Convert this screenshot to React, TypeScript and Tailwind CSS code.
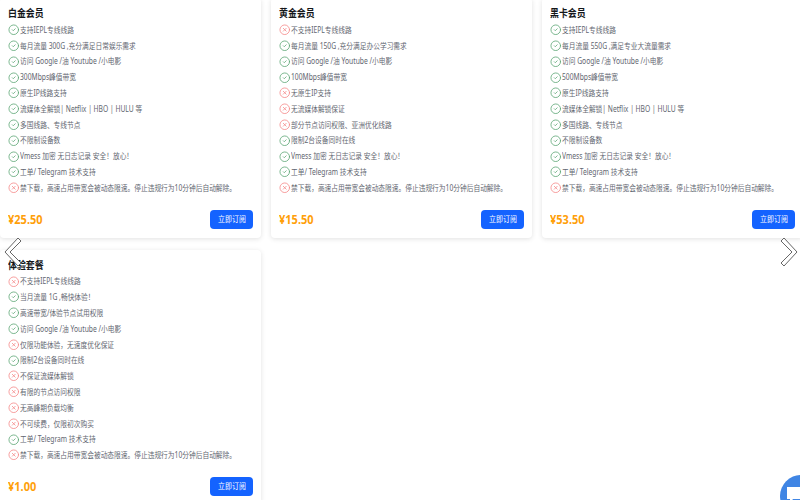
import { FC } from "react";
import { CircleCheck, CircleX } from "lucide-react";

interface IPlan {
  title: string;
  price: string;
  items: [boolean, string][];
}

const LIMIT = "禁下载，高速占用带宽会被动态限速。停止违规行为10分钟后自动解除。";
const TICKET = "工单/ Telegram 技术支持";
const VMESS = "Vmess 加密 无日志记录 安全！放心！";
const ACCESS = "访问 Google /油 Youtube /小电影";

const Plans: IPlan[] = [
  {
    title: "白金会员",
    price: "¥25.50",
    items: [
      [true, "支持IEPL专线线路"],
      [true, "每月流量 300G ,充分满足日常娱乐需求"],
      [true, ACCESS],
      [true, "300Mbps峰值带宽"],
      [true, "原生IP线路支持"],
      [true, "流媒体全解锁| Netflix | HBO | HULU 等"],
      [true, "多国线路、专线节点"],
      [true, "不限制设备数"],
      [true, VMESS],
      [true, TICKET],
      [false, LIMIT],
    ],
  },
  {
    title: "黄金会员",
    price: "¥15.50",
    items: [
      [false, "不支持IEPL专线线路"],
      [true, "每月流量 150G ,充分满足办公学习需求"],
      [true, ACCESS],
      [true, "100Mbps峰值带宽"],
      [false, "无原生IP支持"],
      [false, "无流媒体解锁保证"],
      [false, "部分节点访问权限、亚洲优化线路"],
      [true, "限制2台设备同时在线"],
      [true, VMESS],
      [true, TICKET],
      [false, LIMIT],
    ],
  },
  {
    title: "黑卡会员",
    price: "¥53.50",
    items: [
      [true, "支持IEPL专线线路"],
      [true, "每月流量 550G ,满足专业大流量需求"],
      [true, ACCESS],
      [true, "500Mbps峰值带宽"],
      [true, "原生IP线路支持"],
      [true, "流媒体全解锁| Netflix | HBO | HULU 等"],
      [true, "多国线路、专线节点"],
      [true, "不限制设备数"],
      [true, VMESS],
      [true, TICKET],
      [false, LIMIT],
    ],
  },
  {
    title: "体验套餐",
    price: "¥1.00",
    items: [
      [false, "不支持IEPL专线线路"],
      [true, "当月流量 1G ,畅快体验！"],
      [true, "高速带宽/体验节点试用权限"],
      [true, ACCESS],
      [false, "仅限功能体验，无速度优化保证"],
      [true, "限制2台设备同时在线"],
      [false, "不保证流媒体解锁"],
      [false, "有限的节点访问权限"],
      [false, "无高峰期负载均衡"],
      [false, "不可续费，仅限初次购买"],
      [true, TICKET],
      [false, LIMIT],
    ],
  },
];

const PlanCard: FC<{ plan: IPlan }> = ({ plan }) => {
  return (
    <div className="flex w-[261px] flex-col rounded-[4px] bg-white px-2 pt-2 pb-2 shadow-[0_1px_5px_rgba(0,0,0,0.12)]">
      <h3 className="h-[14px] origin-left scale-x-[0.85] text-[10.5px] leading-[14px] font-bold text-[#14171a]">
        {plan.title}
      </h3>
      <ul className="mt-[2px] flex flex-col">
        {plan.items.map(([ok, text], index) => (
          <li key={index} className="flex h-[15.8px] items-center gap-[0.5px]">
            {ok ? (
              <CircleCheck className="h-[11.5px] w-[11.5px] shrink-0 text-[#5fa777]" strokeWidth={1.7} />
            ) : (
              <CircleX className="h-[11.5px] w-[11.5px] shrink-0 text-[#f58a8a]" strokeWidth={1.7} />
            )}
            <span className="origin-left scale-x-[0.84] text-[8px] whitespace-nowrap text-[#5f6670]">{text}</span>
          </li>
        ))}
      </ul>
      <div className="mt-[13px] flex items-center justify-between">
        <span className="mt-[2px] origin-left scale-x-[0.88] text-[12.5px] font-bold text-[#ff9f0a]">{plan.price}</span>
        <button className="flex h-[19px] w-[43px] items-center justify-center rounded-[4px] bg-[#1463ff] text-white">
          <span className="scale-x-[0.87] text-[8px] whitespace-nowrap">立即订阅</span>
        </button>
      </div>
    </div>
  );
};

const App: FC = () => {
  return (
    <div
      className="relative h-[500px] w-[800px] overflow-hidden bg-white"
      style={{ fontFamily: '"Noto Sans", "Noto Sans CJK SC", sans-serif' }}
    >
      <div className="-mt-[2px] grid w-[803px] grid-cols-[261px_261px_261px] items-start gap-x-[10px] gap-y-[12px]">
        {Plans.map((plan) => (
          <PlanCard plan={plan} key={plan.title} />
        ))}
      </div>

      <svg className="absolute top-[236px] left-[3px] h-[32px] w-[20px]" viewBox="0 0 20 32">
        <path d="M15 2 L18 5 L7 16 L18 27 L15 30 L2 16 Z" fill="#fff" stroke="#666" strokeWidth="1" />
      </svg>
      <svg className="absolute top-[236px] left-[779px] h-[32px] w-[20px]" viewBox="0 0 20 32">
        <path d="M5 2 L2 5 L13 16 L2 27 L5 30 L18 16 Z" fill="#fff" stroke="#666" strokeWidth="1" />
      </svg>

      <div className="absolute -right-[22px] -bottom-[17px] h-[42px] w-[42px] rounded-full bg-[#3f85e4]">
        <svg className="absolute top-[12px] left-[7px] h-[16px] w-[20px]" viewBox="0 0 20 16">
          <path d="M0 0 H20 V12 H6 L3 16 V12 H0 Z" fill="#fff" />
        </svg>
      </div>
    </div>
  );
};

export default App;
